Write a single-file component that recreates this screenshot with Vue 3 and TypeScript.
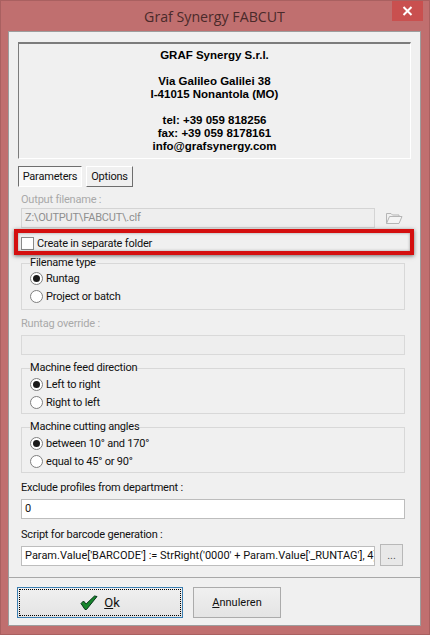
<script setup lang="ts">
interface RadioGroup { title: string; options: string[] }
const filenameType: RadioGroup = { title: 'Filename type', options: ['Runtag', 'Project or batch'] }
const feed: RadioGroup = { title: 'Machine feed direction', options: ['Left to right', 'Right to left'] }
const angles: RadioGroup = { title: 'Machine cutting angles', options: ['between 10° and 170°', 'equal to 45° or 90°'] }
</script>

<template>
  <div class="window">
    <header class="titlebar">
      <span class="title">Graf Synergy FABCUT</span>
      <button class="close" aria-label="Close">
        <svg width="11" height="10" viewBox="0 0 11 10"><path d="M1.5 1 9.5 9M9.5 1 1.5 9" stroke="#fff" stroke-width="2" fill="none" /></svg>
      </button>
    </header>
    <main class="client">
      <section class="info">
        <p>GRAF Synergy S.r.l.</p>
        <p>&nbsp;</p>
        <p>Via Galileo Galilei 38</p>
        <p>I-41015 Nonantola (MO)</p>
        <p>&nbsp;</p>
        <p>tel: +39 059 818256</p>
        <p>fax: +39 059 8178161</p>
        <p>info@grafsynergy.com</p>
      </section>

      <nav class="tabs">
        <div class="tab active">Parameters</div>
        <div class="tab">Options</div>
      </nav>

      <div class="form">
        <label class="label disabled out-label">Output filename :</label>
        <div class="row">
          <div class="field short disabled-field">Z:\OUTPUT\FABCUT\.clf</div>
          <svg class="folder" width="18" height="14" viewBox="0 0 18 14" fill="none" stroke="#b5b5b5">
            <path d="M1.5 12.5V2.5H6l1.5 1.5H14V5.5" />
            <path d="M1.5 12.5 4.5 5.5H17l-3 7Z" fill="#f4f4f4" />
          </svg>
        </div>

        <div class="check-row">
          <span class="checkbox"></span>
          <span>Create in separate folder</span>
        </div>

        <fieldset class="group first">
          <legend>{{ filenameType.title }}</legend>
          <div v-for="(o, i) in filenameType.options" :key="o" class="radio-row">
            <span class="radio" :class="{ on: i === 0 }"></span>{{ o }}
          </div>
        </fieldset>

        <label class="label disabled override-label">Runtag override :</label>
        <div class="field disabled-field blank"></div>

        <fieldset class="group feed">
          <legend>{{ feed.title }}</legend>
          <div v-for="(o, i) in feed.options" :key="o" class="radio-row">
            <span class="radio" :class="{ on: i === 0 }"></span>{{ o }}
          </div>
        </fieldset>

        <fieldset class="group angles">
          <legend>{{ angles.title }}</legend>
          <div v-for="(o, i) in angles.options" :key="o" class="radio-row">
            <span class="radio" :class="{ on: i === 0 }"></span>{{ o }}
          </div>
        </fieldset>

        <label class="label exclude-label">Exclude profiles from department :</label>
        <div class="field">0</div>

        <label class="label script-label">Script for barcode generation :</label>
        <div class="row script-row">
          <div class="field short clip">Param.Value['BARCODE'] := StrRight('0000' + Param.Value['_RUNTAG'], 4)</div>
          <button class="dots">...</button>
        </div>
      </div>

      <footer class="footer">
        <button class="btn ok">
          <span class="focus">
            <svg width="18" height="15" viewBox="0 0 18 15">
              <path d="M1 8.5 3.5 6l2.6 3L14.5 1 17 1.5 6.5 14.5H5Z" fill="#17862c" stroke="#06351a" stroke-width="1" />
            </svg>
            <span class="ok-text"><u>O</u>k</span>
          </span>
        </button>
        <button class="btn cancel"><span><u>A</u>nnuleren</span></button>
      </footer>

      <div class="highlight"></div>
    </main>
  </div>
</template>

<style>
html, body { margin: 0; padding: 0; background: #c06f6f; }
</style>

<style scoped>
* { box-sizing: border-box; }
.window {
  width: 430px;
  height: 635px;
  background: #c06f6f;
  border: 1px solid #a96060;
  padding: 0 8px 8px 7px;
  display: flex;
  flex-direction: column;
  font-family: Roboto, "Liberation Sans", sans-serif;
  font-size: 11px;
  letter-spacing: -0.2px;
  color: #111;
  overflow: hidden;
}
.titlebar {
  height: 30px;
  flex: none;
  position: relative;
  display: flex;
  align-items: center;
  justify-content: center;
}
.title {
  font-family: "Open Sans", "Noto Sans", sans-serif;
  font-size: 14.2px;
  letter-spacing: 0;
  color: #4a2a2a;
}
.close {
  position: absolute;
  top: 0;
  right: -2px;
  width: 31px;
  height: 20px;
  background: #c9504f;
  border: 0;
  padding: 0;
  display: flex;
  align-items: center;
  justify-content: center;
}
.client {
  position: relative;
  flex: 1;
  background: #f0f0f0;
  border: 1px solid #9d9d9d;
  padding: 10px 9px 0;
  display: flex;
  flex-direction: column;
}
.info {
  height: 117px;
  border: 1px solid;
  border-color: #7c7c7c #fff #fff #7c7c7c;
  border-top-width: 2px;
  padding-top: 5px;
  text-align: center;
  font-family: "Liberation Sans", Arial, sans-serif;
  font-weight: 700;
  font-size: 11.5px;
  letter-spacing: 0;
  line-height: 13px;
  color: #000;
}
.info p { margin: 0; }
.tabs { display: flex; gap: 4px; margin-top: 7px; height: 21px; }
.tab {
  height: 21px;
  padding: 0 4px;
  display: flex;
  align-items: center;
  justify-content: center;
  border: 1px solid;
  border-color: #fff #6e6e6e #6e6e6e #fff;
  width: 47px;
}
.tab.active {
  width: 64px;
  border-color: #6e6e6e #fff #fff #6e6e6e;
  background: #f8f8f8;
}
.form { padding: 0 6px 0 3px; display: flex; flex-direction: column; }
.label { display: block; height: 14px; line-height: 14px; }
.disabled { color: #a9a9a9; }
.out-label { margin-top: 6px; }
.row { display: flex; align-items: center; }
.field {
  height: 20px;
  line-height: 18px;
  border: 1px solid #bdbdbd;
  background: #fff;
  padding: 0 2px 0 3px;
  white-space: nowrap;
}
.short { width: 354px; }
.clip { overflow: hidden; letter-spacing: 0; }
.disabled-field { background: #eee; border-color: #d4d4d4; color: #8f8f8f; }
.blank { border-color: #d9d9d9; }
.folder { margin-left: 10px; }
.row:first-of-type { margin-top: 1px; }
.check-row {
  height: 26px;
  margin-top: 2px;
  display: flex;
  align-items: center;
  gap: 3px;
}
.checkbox {
  width: 13px;
  height: 13px;
  background: #fff;
  border: 1px solid #8a8a8a;
}
.group {
  margin: 0;
  padding: 0 0 0 8px;
  border: 1px solid #d8d8d8;
  min-width: 0;
  height: 53px;
}
.group legend {
  padding: 0;
  margin-left: 0;
  line-height: 14px;
  height: 14px;
}
.first { height: 54px; }
.first .radio-row:first-of-type { margin-top: -1px; }
.feed { margin-top: 6px; }
.angles { margin-top: 6px; }
.radio-row {
  height: 18px;
  display: flex;
  align-items: center;
  gap: 3px;
}
.radio {
  width: 13px;
  height: 13px;
  border-radius: 50%;
  border: 1px solid #7f7f7f;
  background: #fff;
  position: relative;
  flex: none;
}
.radio.on::after {
  content: "";
  position: absolute;
  inset: 2px;
  border-radius: 50%;
  background: #1a1a1a;
}
.override-label { margin-top: 7px; }
.exclude-label { margin-top: 8px; }
.script-label { margin-top: 9px; }
.override-label + .field { margin-top: 4px; }
.exclude-label + .field { margin-top: 4px; }
.script-row { margin-top: 2px; align-items: flex-end; }
.dots {
  width: 23px;
  height: 22px;
  margin-left: 5px;
  background: #e8e8e8;
  border: 1px solid #b8b8b8;
  font: inherit;
  color: #555;
  padding: 0;
}
.footer {
  margin-top: 11px;
  margin-left: -9px;
  margin-right: -9px;
  border-top: 1px solid #a8a8a8;
  padding: 9px 8px 0;
  display: flex;
  gap: 10px;
  align-items: flex-start;
}
.btn {
  height: 31px;
  font: inherit;
  color: #111;
  background: linear-gradient(#f0f0f0, #e4e4e4);
  border: 1px solid #ababab;
  padding: 0;
}
.ok {
  width: 166px;
  border-color: #3c7fb1;
  padding: 1px;
}
.focus {
  height: 100%;
  display: flex;
  align-items: center;
  justify-content: center;
  gap: 6px;
  border: 1px dotted #000;
}
.ok-text { font-size: 13px; }
.cancel { width: 88px; }
.highlight {
  position: absolute;
  left: 5px;
  top: 197px;
  width: 400px;
  height: 26px;
  border: 4px solid #d40f0f;
  box-shadow: 0 1px 4px rgba(0, 0, 0, 0.55), inset 0 0 3px rgba(0, 0, 0, 0.35);
  pointer-events: none;
}
</style>
